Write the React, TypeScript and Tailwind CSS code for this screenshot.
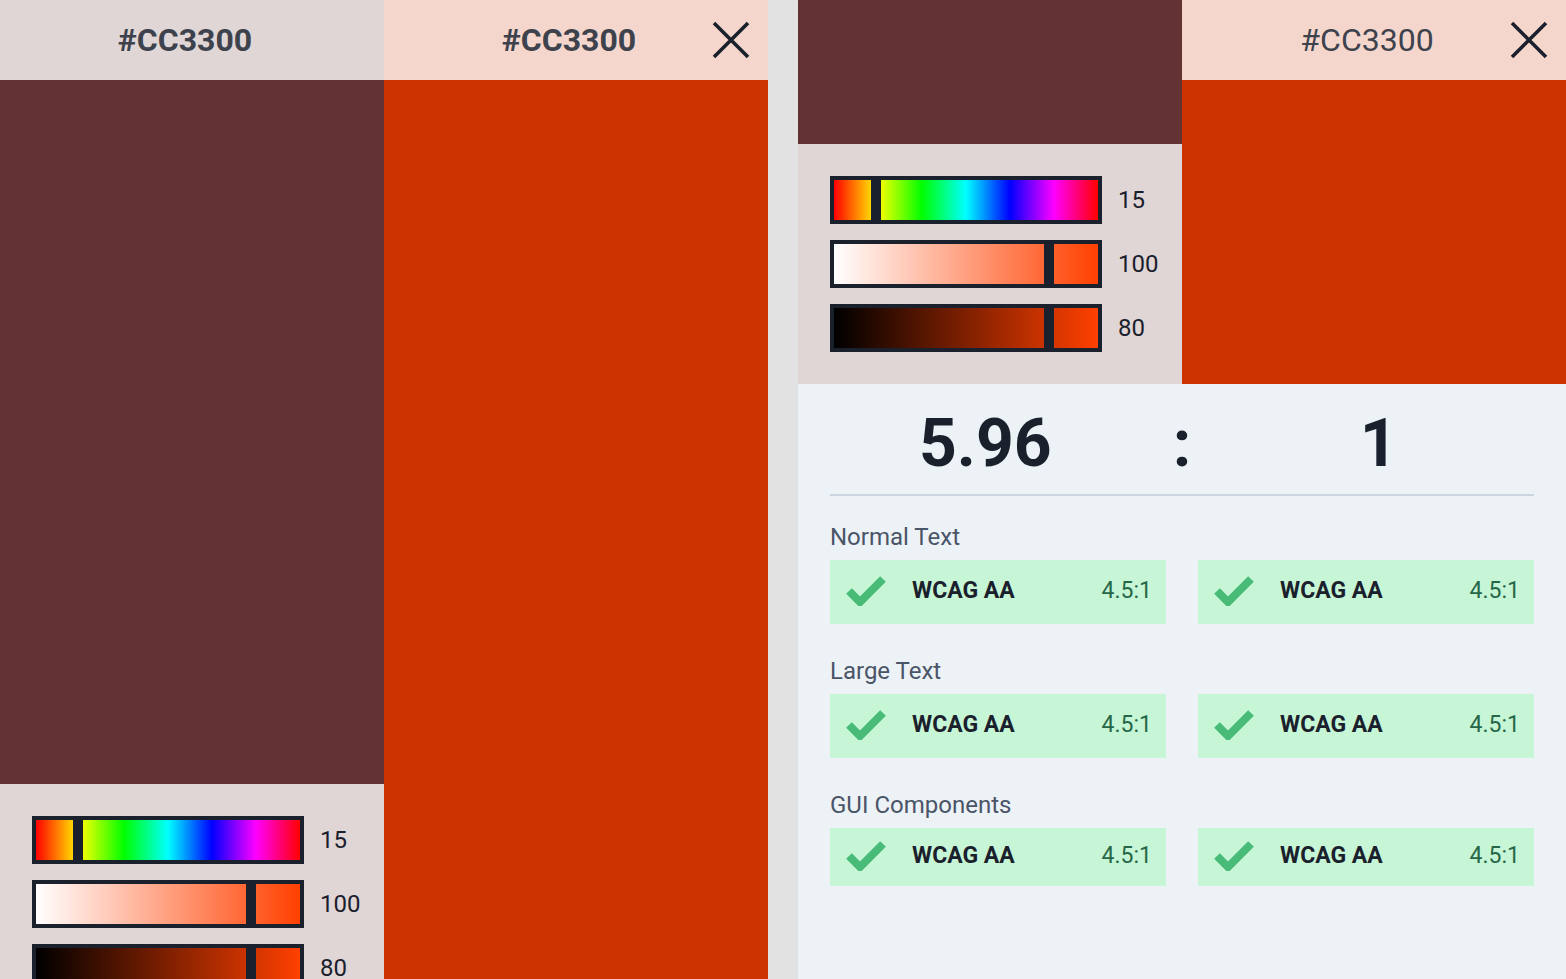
import React from "react";

/*
  Contrast checker: two colour pickers side by side, and the
  ratio panel with WCAG results below the second pair.
*/

const HUE =
  "bg-[linear-gradient(to_right,#ff0000,#ffff00,#00ff00,#00ffff,#0000ff,#ff00ff,#ff0000)]";
const SAT = "bg-[linear-gradient(to_right,#ffffff,#ff4000)]";
const VAL = "bg-[linear-gradient(to_right,#000000,#ff4000)]";

function Slider({
  gradient,
  thumb,
  value,
}: {
  gradient: string;
  thumb: string;
  value: string;
}) {
  return (
    <div className="flex items-center gap-4">
      <div
        className={`relative h-12 w-[272px] shrink-0 border-4 border-[#1a202c] ${gradient}`}
      >
        <div className={`absolute top-0 bottom-0 w-[10px] bg-[#1a202c] ${thumb}`} />
      </div>
      <span className="text-[24px] leading-none text-[#1a202c]">{value}</span>
    </div>
  );
}

function Sliders() {
  return (
    <div className="flex flex-col gap-4 bg-[#e0d6d5] p-8">
      <Slider gradient={HUE} thumb="left-[37px]" value="15" />
      <Slider gradient={SAT} thumb="left-[210px]" value="100" />
      <Slider gradient={VAL} thumb="left-[210px]" value="80" />
    </div>
  );
}

function CloseIcon() {
  return (
    <svg width="38" height="38" viewBox="0 0 38 38" fill="none">
      <path
        d="M2 2 L36 36 M36 2 L2 36"
        stroke="#1a202c"
        strokeWidth="3.6"
      />
    </svg>
  );
}

function Header({
  bg,
  bold,
  close,
}: {
  bg: string;
  bold?: boolean;
  close?: boolean;
}) {
  return (
    <div className={`relative flex h-20 shrink-0 items-center justify-center ${bg}`}>
      <span
        className={`pr-[14px] text-[32px] leading-none text-[#3d424d] ${
          bold ? "font-bold" : "font-normal"
        }`}
      >
        #CC3300
      </span>
      {close && (
        <button
          type="button"
          className="absolute top-1/2 right-[18px] -translate-y-1/2"
        >
          <CloseIcon />
        </button>
      )}
    </div>
  );
}

function CheckIcon() {
  return (
    <svg width="40" height="32" viewBox="0 0 40 32" fill="none">
      <path d="M3 17 L14 28 L37 5" stroke="#48bb78" strokeWidth="8" />
    </svg>
  );
}

function Result({ tall = true }: { tall?: boolean }) {
  return (
    <div
      className={`flex items-center bg-[#c6f6d5] pr-[14px] pb-1 pl-[16px] ${
        tall ? "h-16" : "h-[58px]"
      }`}
    >
      <CheckIcon />
      <span className="ml-[26px] text-[23px] leading-none font-bold text-[#1a202c]">
        WCAG AA
      </span>
      <span className="ml-auto text-[23px] leading-none text-[#276749]">4.5:1</span>
    </div>
  );
}

function ResultGroup({ title, tall }: { title: string; tall?: boolean }) {
  return (
    <div className="flex flex-col">
      <h4 className="text-[24px] leading-[30px] text-[#4a5568]">{title}</h4>
      <div className="mt-2 grid grid-cols-2 gap-8">
        <Result tall={tall} />
        <Result tall={tall} />
      </div>
    </div>
  );
}

export default function App() {
  return (
    <div className="flex h-[979px] w-[1566px] overflow-hidden bg-[#e2e2e2] font-[Roboto,sans-serif]">
      {/* first pair */}
      <section className="flex w-[768px] shrink-0">
        <div className="flex w-[384px] flex-col">
          <Header bg="bg-[#e0d6d5]" bold />
          <div className="h-[704px] shrink-0 bg-[#633232]" />
          <Sliders />
        </div>
        <div className="flex w-[384px] flex-col">
          <Header bg="bg-[#f5d6cc]" bold close />
          <div className="flex-1 bg-[#cc3300]" />
        </div>
      </section>

      {/* second pair with results */}
      <section className="ml-[30px] flex w-[768px] shrink-0 flex-col bg-[#edf2f7]">
        <div className="flex h-[384px] shrink-0">
          <div className="flex w-[384px] flex-col">
            <div className="h-[144px] shrink-0 bg-[#633232]" />
            <div className="flex-1 bg-[#e0d6d5]">
              <Sliders />
            </div>
          </div>
          <div className="flex w-[384px] flex-col">
            <Header bg="bg-[#f5d6cc]" close />
            <div className="flex-1 bg-[#cc3300]" />
          </div>
        </div>

        <div className="flex items-start pt-[27px] text-[66px] leading-none font-bold text-[#1a202c]">
          <span className="flex-1 text-center">5.96</span>
          <span>:</span>
          <span className="flex-1 text-center">1</span>
        </div>

        <div className="flex flex-col px-8">
          <div className="mt-[17px] h-[2px] bg-[#cbd5e0]" />
          <div className="mt-[26px] flex flex-col gap-8">
            <ResultGroup title="Normal Text" />
            <ResultGroup title="Large Text" />
            <ResultGroup title="GUI Components" tall={false} />
          </div>
        </div>
      </section>
    </div>
  );
}
